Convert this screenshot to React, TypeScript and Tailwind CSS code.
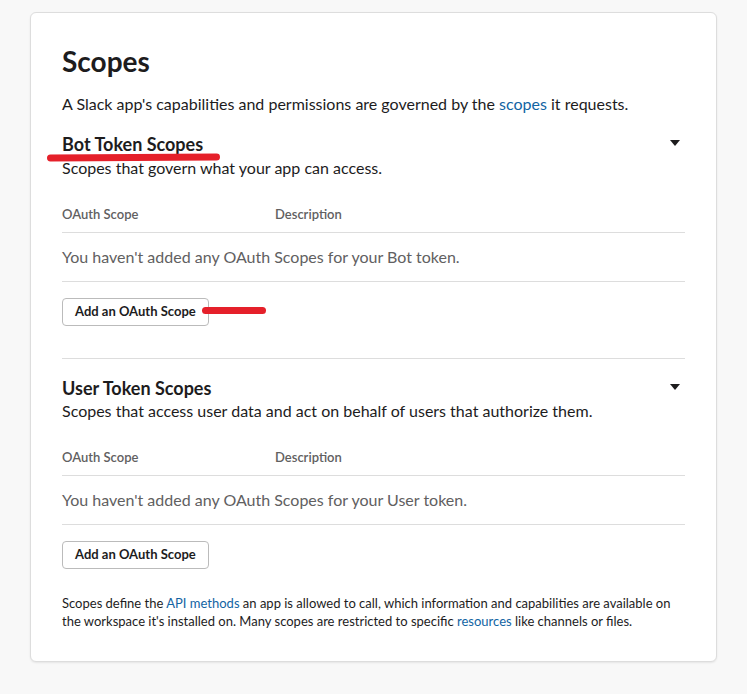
import React from "react";

function Caret() {
  return (
    <svg width="10" height="6" viewBox="0 0 10 6" className="mt-2 mr-[5px]">
      <path d="M0 0 H10 L5 6 Z" fill="#1d1c1d" />
    </svg>
  );
}

function ScopeSection({
  title,
  subtitle,
  token,
  marked,
}: {
  title: string;
  subtitle: string;
  token: string;
  marked?: boolean;
}) {
  return (
    <div>
      <div className="flex items-start justify-between">
        <div className="relative">
          <h2 className="text-[18px] font-bold leading-[24px] text-[#1d1c1d]">{title}</h2>
          {marked && (
            <div className="absolute left-[-15px] top-[22px] h-[7px] w-[173px] rounded-full bg-[#e5202a] -rotate-[0.3deg]" />
          )}
        </div>
        <Caret />
      </div>
      <p className={marked ? "mt-[1px] text-[16px] leading-[22px] text-[#1d1c1d]" : "text-[16px] leading-[22px] text-[#1d1c1d]"}>
        {subtitle}
      </p>

      {/* table */}
      <div className="mt-[25px] flex text-[13px] font-semibold leading-[20px] text-[#616061]">
        <div className="w-[213px]">OAuth Scope</div>
        <div>Description</div>
      </div>
      <div className="mt-[8px] border-t border-[#dddddd]" />
      <p className="py-[13px] text-[16px] leading-[22px] text-[#616061]">
        You haven't added any OAuth Scopes for your {token} token.
      </p>
      <div className="border-t border-[#dddddd]" />

      <div className="relative mt-[16px] flex items-center">
        <button className="h-[28px] rounded-[4px] border border-[#bbbbbb] bg-white px-[12px] text-[13px] font-bold text-[#1d1c1d]">
          Add an OAuth Scope
        </button>
        {marked && (
          <div className="absolute left-[140px] top-[9px] h-[7px] w-[64px] rounded-full bg-[#e5202a]" />
        )}
      </div>
    </div>
  );
}

export default function App() {
  return (
    <div className="min-h-[694px] bg-[#f8f8f8] pt-[12px] pl-[30px] pr-[30px] font-['Lato','Noto_Sans',sans-serif]">
      <div className="w-[687px] rounded-[6px] border border-[#dddddd] bg-white px-[31px] pt-[30px] pb-[31px] shadow-[0_1px_2px_rgba(0,0,0,0.08)]">
        <h1 className="text-[28px] font-bold leading-[36px] text-[#1d1c1d]">Scopes</h1>
        <p className="mt-[14px] text-[16px] leading-[22px] text-[#1d1c1d]">
          A Slack app's capabilities and permissions are governed by the{" "}
          <a className="text-[#1264a3]">scopes</a> it requests.
        </p>

        <div className="mt-[17px]">
          <ScopeSection
            title="Bot Token Scopes"
            subtitle="Scopes that govern what your app can access."
            token="Bot"
            marked
          />
        </div>

        <div className="mt-[32px] border-t border-[#dddddd] pt-[17px]">
          <ScopeSection
            title="User Token Scopes"
            subtitle="Scopes that access user data and act on behalf of users that authorize them."
            token="User"
          />
        </div>

        <p className="mt-[25px] text-[13px] leading-[18px] text-[#1d1c1d]">
          Scopes define the <a className="text-[#1264a3]">API methods</a> an app is allowed to call,
          which information and capabilities are available on the workspace it's installed on. Many
          scopes are restricted to specific <a className="text-[#1264a3]">resources</a> like channels or
          files.
        </p>
      </div>
    </div>
  );
}
